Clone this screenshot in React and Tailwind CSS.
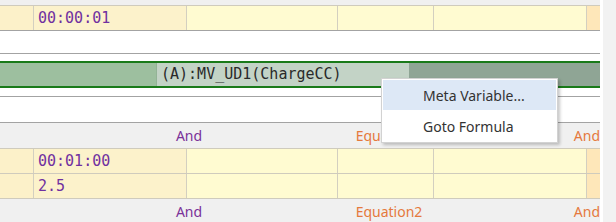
import React from "react";

const mono = { fontFamily: '"DejaVu Sans Mono", "Liberation Mono", monospace' };

function YellowRow({ text, border = "border-[#cfcbbd]" }) {
  return (
    <div className={`flex h-[25px] shrink-0 border-b ${border}`}>
      <div className="w-[34px] shrink-0 bg-[#fcf1c9] border-r border-[#d3cfc0]" />
      <div className="w-[153px] shrink-0 bg-[#fcf2cb] border-r border-[#d3cfc0] flex items-center pl-[4px] text-[15px] text-[#7030a0] font-['DejaVu_Sans_Mono',monospace]">
        {text}
      </div>
      <div className="w-[151px] shrink-0 bg-[#fffbd1] border-r border-[#d3cfc0]" />
      <div className="w-[96px] shrink-0 bg-[#fffbd1] border-r border-[#d3cfc0]" />
      <div className="w-[153px] shrink-0 bg-[#fffbd1] border-r border-[#d3cfc0]" />
      <div className="w-[13px] shrink-0 bg-[#fee7b9]" />
    </div>
  );
}

function GrayRow({ eq, className = "" }) {
  return (
    <div
      className={`flex h-[26px] shrink-0 bg-[#f0f0f0] border-b border-[#cfcbbd] items-center text-[14px] font-['Noto_Sans',sans-serif] ${className}`}
    >
      <div className="w-[34px] shrink-0" />
      <div className="w-[310px] shrink-0 text-center text-[#7b3199] leading-none">And</div>
      <div className="w-[90px] shrink-0 text-center text-[#e5793d] leading-none whitespace-nowrap">{eq}</div>
      <div className="flex-1 text-right text-[#e5793d] leading-none overflow-hidden">And</div>
    </div>
  );
}

export default function App() {
  return (
    <div className="w-[616px] h-[222px] overflow-hidden flex bg-white">
      <div className="w-[600px] shrink-0 flex flex-col overflow-hidden relative">
        <GrayRow eq="Equation1" className="-mt-[20px] pb-[3px]" />
        <YellowRow text="00:00:01" border="border-[#a3a3a3]" />
        <div className="h-[23px] shrink-0 border-b border-[#a3a3a3] bg-white" />
        <div className="h-[43px] shrink-0 border-b border-[#a3a3a3] bg-white pt-[7px]">
          <div className="h-[27px] border-y-2 border-[#197a19] flex">
            <div className="w-[157px] shrink-0 bg-[#9dbf9f] border-r border-[#93b396]" />
            <div className="w-[252px] shrink-0 bg-[#c3d3c6] flex items-center pl-[4px] text-[15px] text-[#2a2a2a]" style={mono}>
              (A):MV_UD1(ChargeCC)
            </div>
            <div className="flex-1 bg-[#8fa595]" />
          </div>
        </div>
        <div className="h-[26px] shrink-0 border-b border-[#a3a3a3] bg-white" />
        <GrayRow eq="Equation1" />
        <YellowRow text="00:01:00" />
        <YellowRow text="2.5" />
        <GrayRow eq="Equation2" />

        <div className="absolute left-[381px] top-[78px] w-[177px] h-[65px] bg-white border border-[#d2d2d2] shadow-[2px_2px_3px_rgba(0,0,0,0.22)] p-[1px] font-['Noto_Sans',sans-serif] text-[14px] text-[#333333]">
          <div className="h-[30px] bg-[#dde8f6] flex items-center pl-[40px]">Meta Variable...</div>
          <div className="h-[1px] ml-[36px] bg-white" />
          <div className="h-[31px] flex items-center pl-[40px]">Goto Formula</div>
        </div>
      </div>
      <div className="w-[3px] shrink-0 bg-white" />
      <div className="w-[13px] shrink-0 bg-[#f2f2f2]" />
    </div>
  );
}
